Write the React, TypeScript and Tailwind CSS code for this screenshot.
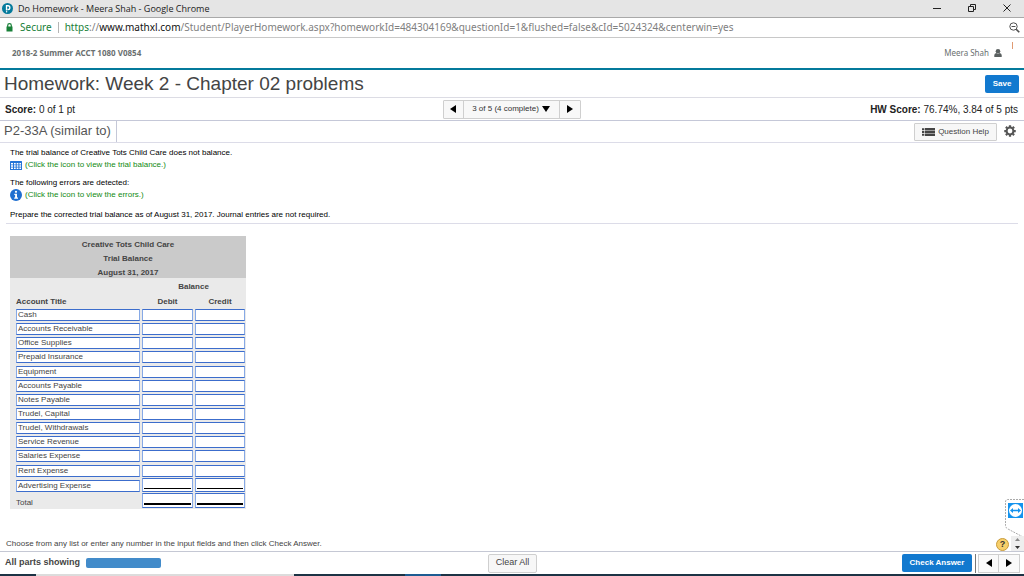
import type { ReactNode } from "react";

const accounts = [
  "Cash",
  "Accounts Receivable",
  "Office Supplies",
  "Prepaid Insurance",
  "Equipment",
  "Accounts Payable",
  "Notes Payable",
  "Trudel, Capital",
  "Trudel, Withdrawals",
  "Service Revenue",
  "Salaries Expense",
  "Rent Expense",
  "Advertising Expense",
];

function Triangle({ dir }: { dir: "left" | "right" | "down" }) {
  const d = { left: "M6 0V8L0 4Z", right: "M0 0V8L6 4Z", down: "M0 1H8L4 7Z" }[dir];
  return (
    <svg viewBox={dir === "down" ? "0 0 8 8" : "0 0 6 8"} className={dir === "down" ? "h-2 w-2" : "h-2 w-[6px]"} aria-hidden="true">
      <path d={d} fill="#000" />
    </svg>
  );
}

function TitleBar() {
  return (
    <header className="flex h-[18px] items-center border-b border-[#a9a9a9] bg-[#e5e5e5] pr-[13px] pl-[2px] font-['Open_Sans',sans-serif] text-[9px] text-[#222]">
      <svg viewBox="0 0 22 22" className="mr-[5px] h-[11px] w-[11px]" aria-hidden="true">
        <circle cx="11" cy="11" r="11" fill="#047a9c" />
        <path d="M9 15V5.500H12A3.700 3.700 0 0 1 12 13H11" fill="none" stroke="#fff" strokeWidth="2.600" />
        <circle cx="9.200" cy="17.500" r="1.500" fill="#fff" />
      </svg>
      <span className="grow">Do Homework - Meera Shah - Google Chrome</span>
      <div className="flex items-center gap-[27px] pb-[2px]">
        <button type="button" aria-label="Minimize">
          <svg viewBox="0 0 8 8" className="block h-2 w-2">
            <path d="M0 4.500H8" stroke="#222" />
          </svg>
        </button>
        <button type="button" aria-label="Restore">
          <svg viewBox="0 0 8 8" className="block h-2 w-2">
            <path d="M0.500 2.500H5.500V7.500H0.500ZM2.500 2V0.500H7.500V5.500H6" fill="none" stroke="#222" />
          </svg>
        </button>
        <button type="button" aria-label="Close">
          <svg viewBox="0 0 8 8" className="block h-2 w-2">
            <path d="M0.500 0.500L7.500 7.500M7.500 0.500L0.500 7.500" stroke="#222" />
          </svg>
        </button>
      </div>
    </header>
  );
}

function AddressBar() {
  return (
    <div className="flex h-5 items-center border-b border-[#c8c8c8] bg-white pr-[4px] pl-[6px] font-['Noto_Sans',sans-serif] text-[10px] text-[#808080]">
      <svg viewBox="0 0 7 9" className="mr-[7px] h-[9px] w-[7px]" aria-hidden="true">
        <path d="M1.700 4V2.500A1.800 1.800 0 0 1 5.300 2.500V4" fill="none" stroke="#188038" strokeWidth="1.200" />
        <rect x="0.500" y="3.500" width="6" height="5" fill="#188038" />
      </svg>
      <span className="text-[#188038]">Secure</span>
      <span className="mx-[6px] h-[11px] w-px bg-[#b5b5b5]" />
      <span className="grow whitespace-nowrap">
        <span className="text-[#188038]">https</span>://<span className="text-[#111]">www.mathxl.com</span>
        /Student/PlayerHomework.aspx?homeworkId=484304169&amp;questionId=1&amp;flushed=false&amp;cId=5024324&amp;centerwin=yes
      </span>
      <button type="button" aria-label="Zoom">
        <svg viewBox="0 0 11 11" className="block h-[11px] w-[11px]" fill="none" stroke="#505050">
          <circle cx="4.500" cy="4.500" r="3.700" />
          <path d="M2.500 4.500H6.500" />
          <path d="M7.200 7.200L10.300 10.300" strokeWidth="1.600" />
        </svg>
      </button>
    </div>
  );
}

function CourseBar() {
  return (
    <div className="relative flex h-8 items-center justify-between border-b-2 border-[#047a9c] pr-[22px] pl-3 font-['Noto_Sans',sans-serif] text-[8px] text-[#6a7070]">
      <span className="font-bold">2018-2 Summer ACCT 1080 V0854</span>
      <button type="button" className="flex items-center gap-[5px]">
        Meera Shah
        <svg viewBox="0 0 8 8" className="h-[8px] w-[8px]" aria-hidden="true">
          <circle cx="4" cy="2.300" r="2.300" fill="#5a6060" />
          <path d="M0.300 8V6Q0.500 4.300 2.200 4Q4 5.400 5.800 4Q7.500 4.300 7.700 6V8Z" fill="#5a6060" />
        </svg>
      </button>
      <span className="absolute top-[4px] right-[11px] h-[7px] w-px bg-[#e09a72]" />
    </div>
  );
}

function Pager() {
  return (
    <div className="flex h-[19px] items-stretch divide-x divide-[#cfcfcf] rounded-[1px] border border-[#cfcfcf] bg-[#f8f8f8] text-[8px] text-[#333]">
      <button type="button" aria-label="Previous question" className="flex w-5 items-center justify-center">
        <Triangle dir="left" />
      </button>
      <button type="button" className="flex w-24 items-center justify-center gap-[3px] whitespace-nowrap">
        3 of 5 (4 complete)
        <Triangle dir="down" />
      </button>
      <button type="button" aria-label="Next question" className="flex w-5 items-center justify-center">
        <Triangle dir="right" />
      </button>
    </div>
  );
}

function Gear() {
  return (
    <svg viewBox="0 0 24 24" className="block h-3 w-3" fill="none" stroke="#555" aria-hidden="true">
      <circle cx="12" cy="12" r="6.800" strokeWidth="4" />
      <path
        d="M12 0.500V4M12 20V23.500M0.500 12H4M20 12H23.500M3.800 3.800L6.500 6.500M17.500 17.500L20.200 20.200M3.800 20.200L6.500 17.500M17.500 6.500L20.200 3.800"
        strokeWidth="4.500"
      />
    </svg>
  );
}

function IconLink({ icon, children }: { icon: ReactNode; children: ReactNode }) {
  return (
    <a href="#details" className="flex h-3 items-center gap-[3px] text-[#128a12]">
      {icon}
      {children}
    </a>
  );
}

function Question() {
  return (
    <section className="mx-[6px] border-b border-[#dcdce8] pt-[4px] pb-[2px] pl-[4px] text-[8px] leading-3 text-black">
      <p>The trial balance of Creative Tots Child Care does not balance.</p>
      <IconLink
        icon={
          <svg viewBox="0 0 12 9" className="h-[9px] w-3" aria-hidden="true">
            <rect width="12" height="9" rx="0.500" fill="#2475d8" />
            <path
              d="M1 2h2v1.500H1zM4 2h1.700v1.500H4zM6.700 2h1.700v1.500H6.700zM9.400 2H11v1.500H9.400zM1 4.300h2v1.500H1zM4 4.300h1.700v1.500H4zM6.700 4.300h1.700v1.500H6.700zM9.400 4.300H11v1.500H9.400zM1 6.600h2V8H1zM4 6.600h1.700V8H4zM6.700 6.600h1.700V8H6.700zM9.400 6.600H11V8H9.400z"
              fill="#fff"
            />
          </svg>
        }
      >
        (Click the icon to view the trial balance.)
      </IconLink>
      <p className="mt-[6px]">The following errors are detected:</p>
      <IconLink
        icon={
          <svg viewBox="0 0 12 12" className="h-3 w-3" aria-hidden="true">
            <circle cx="6" cy="6" r="6" fill="#1f6fd0" />
            <circle cx="6" cy="2.800" r="1.100" fill="#fff" />
            <path d="M4.300 4.700H7V8.500H8V9.700H4.200V8.500H5.100V5.900H4.300Z" fill="#fff" />
          </svg>
        }
      >
        (Click the icon to view the errors.)
      </IconLink>
      <p className="mt-2">Prepare the corrected trial balance as of August 31, 2017. Journal entries are not required.</p>
    </section>
  );
}

const box = "border border-x-[#86a9e6] border-y-[#3c6dcc] bg-white";

function AmountCell({ label, rule }: { label: string; rule?: "single" | "double" }) {
  if (!rule) {
    return (
      <td className="px-px align-middle">
        <input aria-label={label} className={`block h-3 w-full outline-none ${box}`} />
      </td>
    );
  }
  return (
    <td className="px-px pb-px align-bottom">
      <div className={`px-px pb-[2px] ${box}`}>
        <input
          aria-label={label}
          className={`block w-full border-black outline-none ${rule === "single" ? "h-[10px] border-b" : "h-[11px] border-b-2"}`}
        />
      </div>
    </td>
  );
}

function TrialBalance() {
  return (
    <table className="mt-3 ml-[10px] h-[273px] w-[236px] table-fixed border-collapse bg-[#eaeaea] text-[8px] leading-3 text-[#444]">
      <colgroup>
        <col className="w-[131px]" />
        <col className="w-[53px]" />
        <col className="w-[52px]" />
      </colgroup>
      <thead>
        {["Creative Tots Child Care", "Trial Balance", "August 31, 2017"].map((line) => (
          <tr key={line} className="h-[14px] bg-[#cacaca]">
            <th colSpan={3} className="p-0 align-bottom leading-[10px]">
              {line}
            </th>
          </tr>
        ))}
        <tr className="h-[15px]">
          <td />
          <th colSpan={2} className="p-0 pt-[3px]">
            Balance
          </th>
        </tr>
        <tr className="h-[15px]">
          <th className="p-0 pt-[2px] pl-[6px] text-left">Account Title</th>
          <th className="p-0 pt-[2px]">Debit</th>
          <th className="p-0 pt-[2px]">Credit</th>
        </tr>
      </thead>
      <tbody>
        {accounts.map((name, i) => {
          const rule = i === accounts.length - 1 ? "single" : undefined;
          return (
            <tr key={name} className="h-[14px]">
              <td className={`pr-px pl-[6px] ${rule ? "pb-px align-bottom" : "py-0 align-middle"}`}>
                <input aria-label={`Account ${i + 1}`} defaultValue={name} className={`block h-3 w-full px-px outline-none ${box}`} />
              </td>
              <AmountCell label={`${name} debit`} rule={rule} />
              <AmountCell label={`${name} credit`} rule={rule} />
            </tr>
          );
        })}
        <tr className="h-[16px]">
          <td className="p-0 pl-[6px] align-bottom">Total</td>
          <AmountCell label="Total debit" rule="double" />
          <AmountCell label="Total credit" rule="double" />
        </tr>
      </tbody>
    </table>
  );
}

function FloatingTools() {
  return (
    <>
      <div className="absolute right-0 bottom-[6px] h-[46px] w-[19px]">
        <svg viewBox="0 0 19 46" className="h-full w-full" aria-hidden="true">
          <path d="M19 0.500H3Q0.500 0.500 0.500 3V26Q0.500 29 3 30L19 38.500" fill="#fff" stroke="#aaa" strokeDasharray="2 1" />
          <rect x="3" y="4" width="15" height="15" fill="#1493ee" />
          <circle cx="10.500" cy="11.500" r="6.500" fill="#fff" />
          <path d="M5 11.500L8 9V10.800H13V9L16 11.500L13 14V12.200H8V14Z" fill="#1493ee" />
        </svg>
      </div>
      <button
        type="button"
        aria-label="Help"
        className="absolute right-[15px] bottom-0 flex h-[13px] w-[13px] items-center justify-center rounded-full border border-[#c99b3a] bg-[#f7cf6b] text-[9px] font-bold text-[#333]"
      >
        ?
      </button>
      <div className="absolute right-0 bottom-0 flex h-[15px] w-[13px] flex-col items-center justify-around bg-[#eee]">
        <svg viewBox="0 0 5 3" className="h-[3px] w-[5px]" aria-hidden="true">
          <path d="M0 3H5L2.500 0Z" fill="#888" />
        </svg>
        <svg viewBox="0 0 5 3" className="h-[3px] w-[5px]" aria-hidden="true">
          <path d="M0 0H5L2.500 3Z" fill="#333" />
        </svg>
      </div>
    </>
  );
}

function Footer() {
  return (
    <footer>
      <div className="grid h-[23px] grid-cols-[1fr_auto_1fr] items-center border-t border-[#c5c8d4] pr-[4px] pl-[5px]">
        <div className="flex items-center gap-[6px] text-[9px] font-bold text-[#444]">
          All parts showing
          <span className="h-[10px] w-[75px] rounded-[2px] bg-[#428bca]" />
        </div>
        <button type="button" className="h-[19px] w-[49px] rounded-[2px] border border-[#cfcfcf] bg-[#f7f7f7] text-[9px] text-[#444]">
          Clear All
        </button>
        <div className="flex items-center justify-end">
          <button type="button" className="h-[18px] w-[70px] rounded-[2px] bg-[#1279cf] text-[8px] font-bold text-white">
            Check Answer
          </button>
          <span className="mr-[2px] ml-[3px] h-[19px] w-px bg-[#777]" />
          <div className="flex h-[19px] divide-x divide-[#cfcfcf] border border-[#cfcfcf] bg-[#fafafa]">
            <button type="button" aria-label="Previous" className="flex w-5 items-center justify-center">
              <Triangle dir="left" />
            </button>
            <button type="button" aria-label="Next" className="flex w-5 items-center justify-center">
              <Triangle dir="right" />
            </button>
          </div>
        </div>
      </div>
      <div className="flex h-[2px]">
        <span className="w-9 bg-[#1c3345]" />
        <span className="w-[258px] bg-[#dcdcdc]" />
        <span className="w-[111px] bg-[#1c3345]" />
        <span className="w-9 bg-[#1d5c92]" />
        <span className="grow bg-[#1c3345]" />
      </div>
    </footer>
  );
}

export default function App() {
  return (
    <div className="flex min-h-screen flex-col bg-white font-['Liberation_Sans',Arial,sans-serif]">
      <TitleBar />
      <AddressBar />
      <CourseBar />
      <div className="flex h-7 items-center justify-between border-b border-[#dcdce4] pr-[5px] pl-[4px]">
        <h1 className="text-[19px] leading-6 text-[#444]">Homework: Week 2 - Chapter 02 problems</h1>
        <button type="button" className="h-[18px] w-[34px] rounded-[2px] bg-[#1279cf] text-[8px] font-bold text-white">
          Save
        </button>
      </div>
      <div className="grid h-[23px] grid-cols-[1fr_auto_1fr] items-center border-b border-[#c5c8d8] pr-[6px] pl-[5px] text-[10px] text-[#222]">
        <p>
          <b>Score:</b> 0 of 1 pt
        </p>
        <Pager />
        <p className="text-right">
          <b>HW Score:</b> 76.74%, 3.84 of 5 pts
        </p>
      </div>
      <div className="flex h-[22px] items-stretch justify-between border-b border-[#dcdce8] pr-2 pl-[4px]">
        <h2 className="border-r border-[#c5c8d8] pr-[5px] text-[13px] leading-5 text-[#555]">P2-33A (similar to)</h2>
        <div className="flex items-center gap-[7px]">
          <button
            type="button"
            className="flex h-[18px] w-[83px] items-center justify-center gap-[3px] rounded-[1px] border border-[#cfcfcf] bg-[#f7f7f7] text-[8px] whitespace-nowrap text-[#444]"
          >
            <svg viewBox="0 0 13 8" className="h-2 w-[13px]" aria-hidden="true">
              <path d="M0 0.300h2.400v2H0zM3 0h10v2.300H3zM0 3h2.400v2H0zM3 2.800h10v2.300H3zM0 5.800h2.400v2H0zM3 5.600h10V8H3z" fill="#444" />
            </svg>
            Question Help
          </button>
          <button type="button" aria-label="Settings" className="pb-px">
            <Gear />
          </button>
        </div>
      </div>
      <main className="relative flex grow flex-col">
        <Question />
        <TrialBalance />
        <p className="mt-auto pb-px pl-[6px] text-[8px] leading-3 text-[#444]">
          Choose from any list or enter any number in the input fields and then click Check Answer.
        </p>
        <FloatingTools />
      </main>
      <Footer />
    </div>
  );
}
